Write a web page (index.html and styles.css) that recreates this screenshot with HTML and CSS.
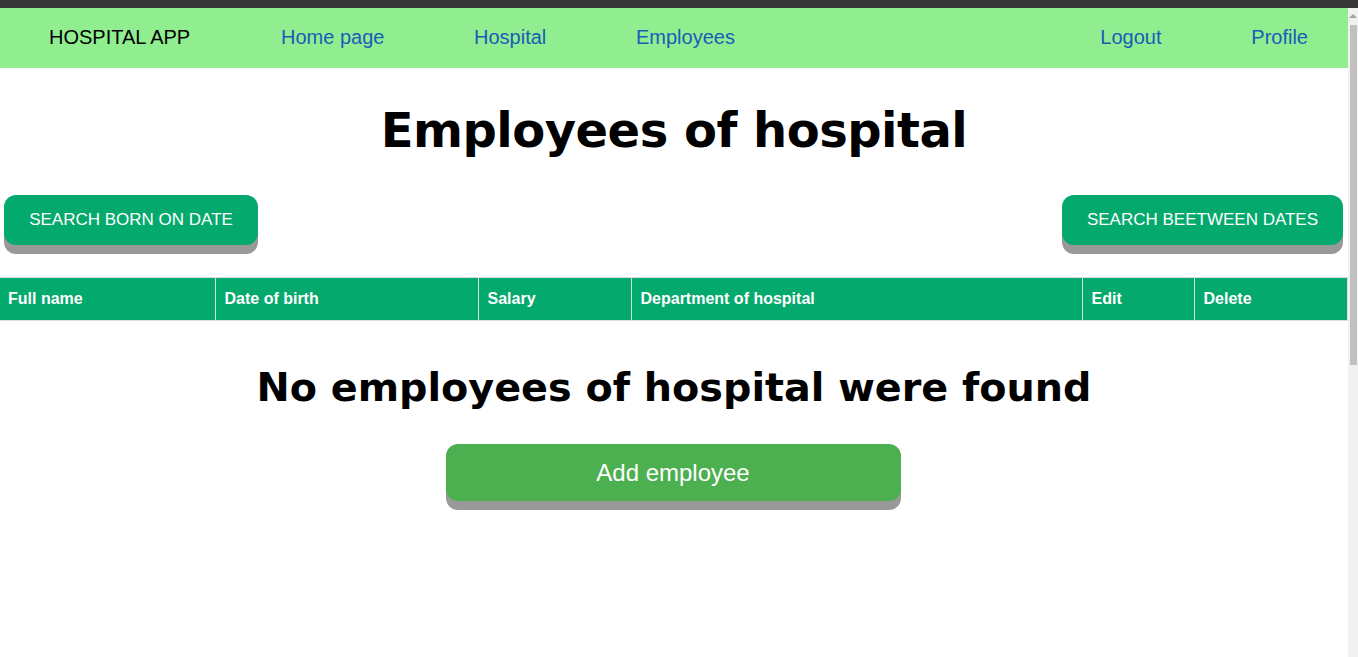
FILE: index.html
```html
<!DOCTYPE html>
<html lang="en">
<head>
<meta charset="utf-8">
<title>Hospital App</title>
<link rel="stylesheet" href="styles.css">
</head>
<body>
<div class="chrome"></div>
<div class="frame">
  <div class="page">
    <nav class="nav">
      <span class="brand">HOSPITAL APP</span>
      <a class="link l-home" href="#">Home page</a>
      <a class="link l-hosp" href="#">Hospital</a>
      <a class="link l-emp" href="#">Employees</a>
      <span class="spacer"></span>
      <a class="link l-logout" href="#">Logout</a>
      <a class="link l-profile" href="#">Profile</a>
    </nav>
    <h1 class="title">Employees of hospital</h1>
    <div class="actions">
      <button class="btn btn-search">SEARCH BORN ON DATE</button>
      <button class="btn btn-search btn-between">SEARCH BEETWEEN DATES</button>
    </div>
    <table class="table">
      <thead>
        <tr>
          <th class="c1">Full name</th>
          <th class="c2">Date of birth</th>
          <th class="c3">Salary</th>
          <th class="c4">Department of hospital</th>
          <th class="c5">Edit</th>
          <th class="c6">Delete</th>
        </tr>
      </thead>
    </table>
    <h2 class="empty">No employees of hospital were found</h2>
    <div class="add-wrap">
      <button class="btn btn-add">Add employee</button>
    </div>
  </div>
  <div class="scrollbar">
    <div class="arrow"></div>
    <div class="thumb"></div>
  </div>
</div>
</body>
</html>
```
FILE: styles.css
```css
* { box-sizing: border-box; }
html, body { margin: 0; padding: 0; height: 100%; overflow: hidden; background: #fff; }
body { font-family: "Liberation Sans", Arial, sans-serif; }

.chrome { height: 8px; background: #363636; }

.frame { display: flex; height: 649px; }
.page { flex: 1; min-width: 0; }

.scrollbar { width: 10px; background: #f1f1f1; display: flex; flex-direction: column; align-items: center; }
.arrow { width: 0; height: 0; margin-top: 6px; border-left: 4px solid transparent; border-right: 4px solid transparent; border-bottom: 4px solid #a3a3a3; }
.thumb { width: 7px; margin-left: 1px; height: 340px; margin-top: 7px; background: #c1c1c1; }

.nav { height: 60px; background: #90ee90; display: flex; align-items: center; font-size: 20px; padding-bottom: 2px; }
.brand { color: #000; margin-left: 49px; width: 232px; }
.link { color: #1a5cb8; text-decoration: none; }
.l-home { width: 193px; }
.l-hosp { width: 162px; }
.spacer { flex: 1; }
.l-logout { width: 151px; }
.l-profile { margin-right: 40px; }

.title { font-family: "DejaVu Sans", Verdana, sans-serif; font-weight: bold; font-size: 48px; letter-spacing: -0.5px; text-align: center; margin: 0; padding-top: 37px; height: 127px; line-height: 50px; }

.actions { display: flex; justify-content: space-between; padding: 0 5px 0 4px; height: 82px; }

.btn { border: none; color: #fff; font-family: "Liberation Sans", Arial, sans-serif; cursor: pointer; }
.btn-search { background: #04a96d; height: 50px; border-radius: 12px; box-shadow: 0 9px #999; font-size: 17px; padding: 0 20px; }
.btn-search:first-child { width: 254px; }
.btn-between { width: 281px; }

.table { border-collapse: collapse; width: 1348px; }
.table th { background: #04a96d; color: #fff; font-size: 16px; font-weight: bold; text-align: left; height: 43px; padding: 0 0 0 9px; border: 1px solid #ddd; }
.table th:first-child { border-left: none; padding-left: 8px; }
.c1 { width: 215px; }
.c2 { width: 263px; }
.c3 { width: 153px; }
.c4 { width: 451px; }
.c5 { width: 112px; }

.empty { font-family: "DejaVu Sans", Verdana, sans-serif; font-weight: bold; font-size: 39.7px; text-align: center; margin: 0; padding-top: 44px; height: 123px; line-height: 44px; }

.add-wrap { display: flex; justify-content: center; padding-right: 2px; }
.btn-add { background: #4caf50; width: 455px; height: 57px; border-radius: 12px; box-shadow: 0 9px #999; font-size: 24px; }
```
